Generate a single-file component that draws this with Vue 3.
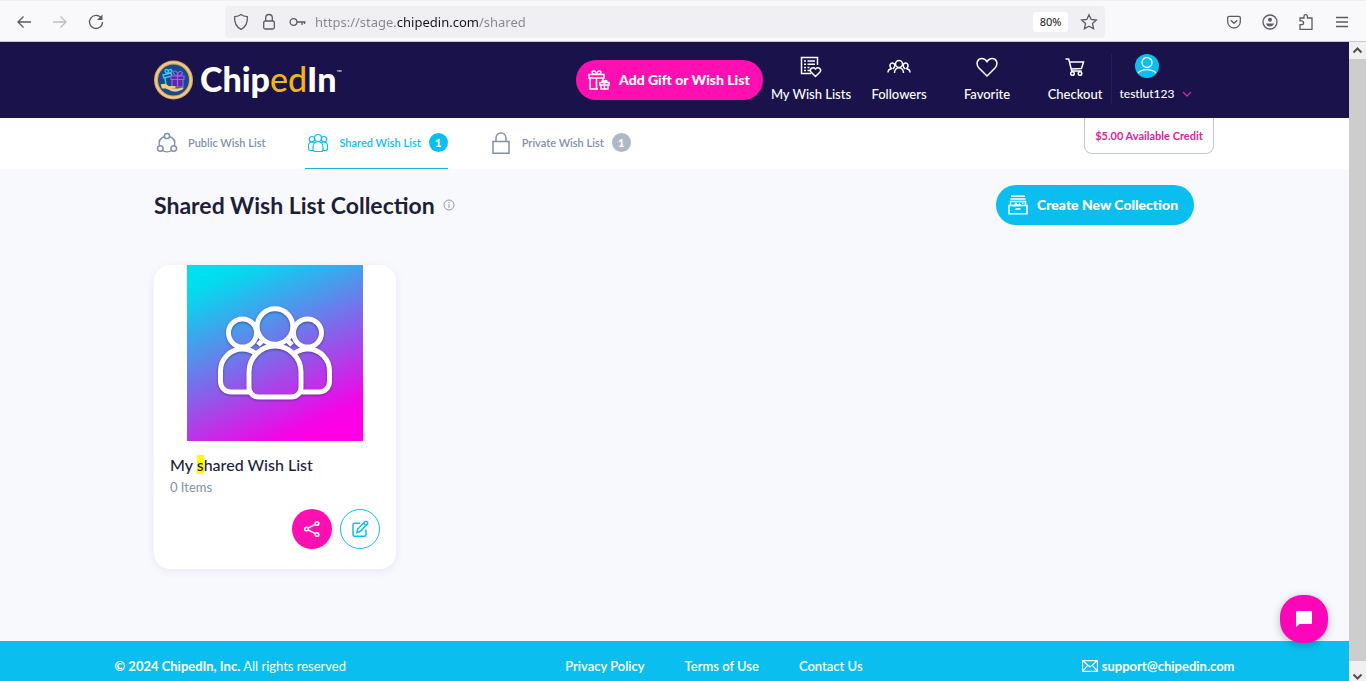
<script setup>
import { ref } from 'vue'

const address = ref('https://stage.chipedin.com/shared')

const tabs = [
  { id: 'public', label: 'Public Wish List', count: null },
  { id: 'shared', label: 'Shared Wish List', count: 1 },
  { id: 'private', label: 'Private Wish List', count: 1 },
]
const activeTab = 'shared'

const footerLinks = ['Privacy Policy', 'Terms of Use', 'Contact Us']
</script>

<template>
  <div class="browser">
    <div class="toolbar">
      <div class="tool-left">
        <button class="tool" aria-label="Back">
          <svg width="18" height="16" viewBox="0 0 18 16"><path d="M16 8H3M8.500 2.500 3 8l5.500 5.500" /></svg>
        </button>
        <button class="tool dim" aria-label="Forward" disabled>
          <svg width="18" height="16" viewBox="0 0 18 16"><path d="M2 8h13M9.500 2.500 15 8l-5.500 5.500" /></svg>
        </button>
        <button class="tool" aria-label="Reload">
          <svg width="18" height="18" viewBox="0 0 18 18"><path d="M14.500 5.500A6.500 6.500 0 1 0 15.500 9" /><path class="solid" d="M15.500 1.500v5.500H10z" /></svg>
        </button>
      </div>
      <div class="urlbar">
        <svg width="16" height="18" viewBox="0 0 16 18"><path d="M8 1.500c2 1.500 4 2 6.300 2.200C14.800 9.500 12.500 14 8 16.300 3.500 14 1.200 9.500 1.700 3.700 4 3.500 6 3 8 1.500z" /></svg>
        <svg width="16" height="18" viewBox="0 0 16 18"><rect x="2.700" y="8" width="10.600" height="8" rx="1.500" /><path d="M4.700 8V4.800a3.300 3.300 0 0 1 6.600 0V8" /></svg>
        <svg width="18" height="12" viewBox="0 0 18 12"><circle cx="4.500" cy="6" r="3.400" /><path d="M8 6h8.500M13 6v3M15.500 6v2" /></svg>
        <input v-model="address" class="address" type="text" aria-label="Address" />
        <button class="zoom-level">80%</button>
        <button class="tool" aria-label="Bookmark this page">
          <svg width="18" height="18" viewBox="0 0 18 18"><path d="m9 1.700 2.200 4.800 5.200.6-3.900 3.500 1.100 5.200L9 13.200l-4.600 2.600 1.100-5.200L1.600 7.100l5.200-.6z" /></svg>
        </button>
      </div>
      <div class="tool-right">
        <button class="tool" aria-label="Save to Pocket">
          <svg width="16" height="16" viewBox="0 0 16 16"><path d="M1.700 3.800a1.500 1.500 0 0 1 1.500-1.500h9.600a1.500 1.500 0 0 1 1.500 1.500v3.900a6.300 6.300 0 0 1-12.600 0zM4.800 6.300 8 9.300l3.200-3" /></svg>
        </button>
        <button class="tool" aria-label="Account">
          <svg width="16" height="16" viewBox="0 0 16 16"><circle cx="8" cy="8" r="7" /><circle class="solid" cx="8" cy="5.800" r="2" /><path class="solid" d="M4 9.500h8a4.200 4.200 0 0 1-8 0z" /></svg>
        </button>
        <button class="tool" aria-label="Extensions">
          <svg width="16" height="18" viewBox="0 0 16 18"><path d="M2 16.300v-4.600h1.700a1.900 1.900 0 0 0 0-3.800H2V5h4V3.400a1.700 1.700 0 0 1 3.400 0V5H14v11.300z" /></svg>
        </button>
        <button class="tool" aria-label="Menu">
          <svg width="16" height="14" viewBox="0 0 16 14"><path d="M2 2.500h12M2 7h12M2 11.500h12" /></svg>
        </button>
      </div>
    </div>

    <div class="viewport">
      <div class="page">
        <header class="header">
          <div class="wrap header-row">
            <a class="logo" href="#" aria-label="ChipedIn home">
              <svg width="40" height="40" viewBox="0 0 40 40">
                <circle cx="19.500" cy="20" r="19.500" fill="#d9a95c" />
                <circle cx="19.500" cy="20" r="17.500" fill="none" stroke="#f0cf90" stroke-width="1.500" />
                <circle cx="19.500" cy="20" r="15.500" fill="#154a8f" />
                <g fill="none" stroke="#45c8ee" stroke-width="1.400">
                  <path d="m9 15 8-2 1 3-8 2zM11 18l1 7M13.500 13.500c-3-1-3-4-1-4s2 2 1.500 4c0-3 2-5 3.500-3.500s-1 3-3.500 3.500" />
                </g>
                <g fill="#5b2aa5" stroke="#a55bea" stroke-width="1.200">
                  <path d="M18 19.500h11V27H18zM17 16h13v3.500H17zM23.500 16v11" />
                  <path fill="none" d="M23.500 16c-5-1-5-5-2.500-5s2.500 3 2.500 5c0-2 1-5 3.500-4.500s2 4-3.500 4.500" />
                </g>
                <path fill="#f0c888" d="M6.500 24.500c4-1.500 6-.5 8 1.500h6c1.500 0 1.500 2 0 2h-4l7 .5 5-1c1.500 0 1 1.500 0 2-3 1.500-6 2.500-9 2-4-.5-6-3-9-3H8z" />
              </svg>
              <span class="wordmark">Chip<i>ed</i>In</span><span class="tm">™</span>
            </a>

            <a class="pill pink" href="#">
              <svg class="line" width="22" height="20" viewBox="0 0 22 20"><path d="M2 8v11h8M1 4.500h15V8H1zM8.500 8V19M15 8v2M8.500 4.500C3 4.500 3.500 1 5.500 1s3 2 3 3.500c0-1.500 1-3.500 3-3.500s2.500 3.500-3 3.500M12 12.500h9V15h-9zM13 15v4h7v-4M16.500 12.500V19M16.500 12.500c-3 0-2.500-2-1.500-2s1.500 1 1.500 2c0-1 .5-2 1.500-2s1.500 2-1.500 2" /></svg>
              Add Gift or Wish List
            </a>

            <nav class="nav" aria-label="Main">
              <a class="nav-item" href="#">
                <svg class="line" width="22" height="22" viewBox="0 0 22 22"><path d="M11 17.500H1.500v-16h16V9M4 5h2M7.500 5H15M4 8.200h2M7.500 8.200H15M4 11.400h2M7.500 11.400h2M4 14.500h2M7.500 14.500H11" /><path d="M15.500 20.500 11 16c-2-2.500 1.500-6 4.500-3 3-3 6.500.5 4.500 3z" /></svg>
                <span>My Wish Lists</span>
              </a>
              <a class="nav-item" href="#">
                <svg class="line" width="24" height="22" viewBox="0 0 24 22"><circle cx="12" cy="8" r="3.500" /><path d="M7.500 17c0-7 9-7 9 0M4.800 13c-4-4-.5-6 .5-6s2.500 1 2.500 2.500-.8 2.500-2 3.500M1 16.500c0-2 1.500-3.500 3.500-3.500M19.200 13c4-4 .5-6-.5-6s-2.500 1-2.500 2.500.8 2.500 2 3.500M23 16.500c0-2-1.500-3.500-3.500-3.500" /></svg>
                <span>Followers</span>
              </a>
              <a class="nav-item" href="#">
                <svg class="line" width="22" height="22" viewBox="0 0 22 22"><path d="M11 20 3 12C-1 7 2 2.500 6 2.500c2.500 0 4 1.500 5 3.200 1-1.700 2.500-3.200 5-3.200 4 0 7 4.500 3 9.500z" /></svg>
                <span>Favorite</span>
              </a>
              <a class="nav-item" href="#">
                <svg class="line" width="22" height="22" viewBox="0 0 22 22"><path d="M1.500 3h3.200l3 12h10M6 6h13.500l-2 6.500-10.500.5" /><circle cx="8.500" cy="17.500" r="1.800" /><circle cx="16" cy="17.500" r="1.800" /></svg>
                <span>Checkout</span>
              </a>
              <button class="account">
                <svg class="avatar" width="24" height="24" viewBox="0 0 24 24"><circle cx="12" cy="12" r="12" fill="#0abff0" /><g fill="none" stroke="#fff" stroke-width="1.300"><circle cx="12" cy="8.500" r="5" /><path d="M3 19c4-4.500 14-4.500 18 0" /></g></svg>
                <span>testlut123</span>
                <svg class="chevron" width="10" height="6" viewBox="0 0 10 6"><path d="m1 1 4 4 4-4" fill="none" stroke="#d91fae" stroke-width="1.300" /></svg>
              </button>
            </nav>
          </div>
        </header>

        <div class="tabbar">
          <div class="wrap tab-row">
            <nav class="tabs" aria-label="Wish lists">
              <a v-for="tab in tabs" :key="tab.id" href="#" class="tab" :class="{ active: tab.id === activeTab }">
                <svg v-if="tab.id === 'public'" class="line" width="26" height="22" viewBox="0 0 26 22"><circle cx="13" cy="4" r="2.600" /><circle cx="6.300" cy="16.500" r="2.800" /><circle cx="19.700" cy="16.500" r="2.800" /><path d="M10.500 4.500C6.500 6 4.500 9.500 5.500 13.500M15.500 4.500c4 1.500 6 5 5 9M8.500 18.500c2.500 1.700 6.500 1.700 9 0" /></svg>
                <svg v-else-if="tab.id === 'shared'" class="line thin" width="26" height="22" viewBox="0 0 26 22"><circle cx="13" cy="6" r="3.500" /><circle cx="7" cy="7.200" r="2.700" /><circle cx="19" cy="7.200" r="2.700" /><path d="M8 15c0-7 10-7 10 0v2.500a2 2 0 0 1-2 2h-6a2 2 0 0 1-2-2zM8 18.500H5.500a2 2 0 0 1-2-2V14c0-2.500 1.500-4 3.500-4 1 0 2 .3 2.500 1M18 18.500h2.500a2 2 0 0 0 2-2V14c0-2.500-1.500-4-3.500-4-1 0-2 .3-2.500 1" /></svg>
                <svg v-else class="line" width="26" height="22" viewBox="0 0 26 22"><path d="M5 9.500h16v11.800H5zM8 9.500V6.200c0-7 10-7 10 0v3.300" /></svg>
                <span>{{ tab.label }}</span>
                <b v-if="tab.count" class="badge">{{ tab.count }}</b>
              </a>
            </nav>
            <a class="credit" href="#">$5.00 Available Credit</a>
          </div>
        </div>

        <main class="main">
          <div class="wrap heading">
            <h1>Shared Wish List Collection</h1>
            <button class="info" aria-label="About shared wish lists">
              <svg width="12" height="12" viewBox="0 0 12 12"><circle cx="6" cy="6" r="5" /><path d="M6 5.200V9M6 3v1" /></svg>
            </button>
            <a class="pill blue" href="#">
              <svg class="line" width="20" height="20" viewBox="0 0 20 20"><path d="M3 1.200h14M2.500 4h15M2.500 10.500V6.500h15v4M1 10.500h18v8.300H1zM7.500 14h5" /><path class="fill" d="m4.500 11.500 3.500-4 2 2 2-1.500 1 3zM14 7.500h1.500V9H14z" /></svg>
              Create New Collection
            </a>
          </div>

          <ul class="wrap cards">
            <li class="card">
              <svg class="cover" viewBox="0 0 176 176" role="img" aria-label="Group">
                <defs>
                  <linearGradient id="cover-fill" x1=".24" y1="0" x2=".7" y2="1">
                    <stop offset="0" stop-color="#00dfee" />
                    <stop offset=".06" stop-color="#05d9ee" />
                    <stop offset=".54" stop-color="#8563ea" />
                    <stop offset=".92" stop-color="#f404e6" />
                    <stop offset="1" stop-color="#ff00e6" />
                  </linearGradient>
                </defs>
                <rect width="176" height="176" fill="url(#cover-fill)" />
                <g class="people">
                  <circle cx="55.500" cy="68" r="14" />
                  <circle cx="120.500" cy="68" r="14" />
                  <circle cx="88" cy="61.500" r="17.800" />
                  <path d="M62 127H44a10.500 10.500 0 0 1-10.500-10.500V106a22 22 0 0 1 22-22c5 0 9 1.500 12.500 4M114 127h18a10.500 10.500 0 0 0 10.500-10.500V106a22 22 0 0 0-22-22c-5 0-9 1.500-12.500 4" />
                  <path d="M62 107a26 26 0 0 1 52 0v15.500a9.500 9.500 0 0 1-9.500 9.500h-33a9.500 9.500 0 0 1-9.500-9.500zM71 80l4-4M105 80l-4-4" />
                </g>
              </svg>
              <div class="card-body">
                <h2>My <mark>s</mark>hared Wish List</h2>
                <p>0 Items</p>
                <div class="actions">
                  <button class="round share" aria-label="Share">
                    <svg class="line" width="18" height="18" viewBox="0 0 18 18"><circle cx="3.500" cy="9" r="1.800" /><circle cx="14" cy="3.500" r="1.800" /><circle cx="14" cy="14.500" r="1.800" /><path d="m5.200 8.200 7-3.800M5.200 9.800l7 3.800" /></svg>
                  </button>
                  <button class="round edit" aria-label="Edit">
                    <svg class="line" width="18" height="18" viewBox="0 0 18 18"><path d="M9 3.200H3.500A1.500 1.500 0 0 0 2 4.700v10A1.500 1.500 0 0 0 3.500 16.200h10a1.500 1.500 0 0 0 1.500-1.500V9.500M6 12.500l.7-3.500L14 1.500c1.500-1 3.300.7 2.500 2.300L9.300 11.300zM12.500 3.200l2.300 2.300" /></svg>
                  </button>
                </div>
              </div>
            </li>
          </ul>
        </main>

        <footer class="footer">
          <div class="footer-row">
            <p><strong>© 2024 ChipedIn, Inc.</strong> All rights reserved</p>
            <nav class="footer-links" aria-label="Legal">
              <a v-for="link in footerLinks" :key="link" href="#">{{ link }}</a>
            </nav>
            <a class="mail" href="mailto:support@chipedin.com">
              <svg width="16" height="12" viewBox="0 0 16 12"><path d="M.6.600h14.800v10.800H.6zM.6.600 8 7 15.400.600M.6 11.400l5-6M15.400 11.400l-5-6" /></svg>
              support@chipedin.com
            </a>
          </div>
        </footer>

        <button class="chat" aria-label="Open chat">
          <svg width="18" height="18" viewBox="0 0 18 18"><path fill="#fff" d="M2 1h14a1 1 0 0 1 1 1v11a1 1 0 0 1-1 1H4.500L1 17V2a1 1 0 0 1 1-1z" /></svg>
        </button>
      </div>

      <div class="scrollbar" aria-hidden="true">
        <svg width="17" height="17" viewBox="0 0 17 17"><path d="m4.500 10.500 4-4 4 4" /></svg>
        <div class="thumb"></div>
        <svg width="17" height="20" viewBox="0 0 17 20"><path d="m4.500 13.500 4 4 4-4" /></svg>
      </div>
    </div>
  </div>
</template>

<style>
body {
  margin: 0;
}
</style>

<style scoped>
* {
  box-sizing: border-box;
}
.browser {
  display: flex;
  flex-direction: column;
  min-height: 100vh;
  font-family: Lato, "Liberation Sans", sans-serif;
  color: #1f1d3a;
}
a {
  color: inherit;
  text-decoration: none;
}
button {
  padding: 0;
  border: 0;
  background: none;
  color: inherit;
  font: inherit;
  cursor: pointer;
}
h1,
h2,
p,
ul {
  margin: 0;
  padding: 0;
}
svg {
  display: block;
  flex: none;
}
.line {
  fill: none;
  stroke: currentColor;
  stroke-width: 1.5;
}
.line.thin {
  stroke-width: 1.2;
}
.line .fill {
  fill: currentColor;
  stroke: none;
}

/* Browser toolbar */
.toolbar {
  display: flex;
  align-items: center;
  height: 42px;
  padding-top: 1px;
  background: #f9f9fb;
  border-top: 1px solid #f0f0f4;
  border-bottom: 1px solid #c8c6d6;
}
.toolbar svg {
  fill: none;
  stroke: #5b5b66;
  stroke-width: 1.3;
}
.toolbar .solid {
  fill: #5b5b66;
  stroke: none;
}
.toolbar .dim svg {
  stroke: #bdbdc3;
}
.tool-left {
  display: flex;
  align-items: center;
  gap: 18px;
  width: 225px;
  padding-left: 15px;
}
.tool-right {
  display: flex;
  align-items: center;
  justify-content: flex-end;
  gap: 20px;
  width: 261px;
  padding-right: 16px;
}
.urlbar {
  display: flex;
  flex: 1;
  align-items: center;
  gap: 12px;
  height: 32px;
  padding: 0 7px 0 8px;
  border-radius: 4px;
  background: #f0f0f4;
}
.address {
  flex: 1;
  min-width: 0;
  height: 24px;
  margin-left: -4px;
  padding: 0;
  border: 0;
  outline: 0;
  background: linear-gradient(90deg, #85858d 81px, #15141a 81px, #15141a 163px, #85858d 163px);
  background-clip: text;
  -webkit-background-clip: text;
  color: transparent;
  font: 13px "Noto Sans", sans-serif;
}
.zoom-level {
  width: 35px;
  height: 20px;
  border-radius: 3px;
  background: #fff;
  color: #15141a;
  font: 11px "Noto Sans", sans-serif;
}

/* Page frame */
.viewport {
  display: flex;
  flex: 1;
}
.page {
  position: relative;
  display: flex;
  flex: 1;
  flex-direction: column;
  min-width: 0;
  background: #f8f9fd;
}
.wrap {
  width: 100%;
  max-width: 1041px;
  margin: 0 auto;
  padding-right: 1px;
}
.scrollbar {
  display: flex;
  flex-direction: column;
  width: 17px;
  background: #f0f0f0;
}
.scrollbar svg {
  fill: none;
  stroke: #505050;
  stroke-width: 2;
}
.thumb {
  flex: 1;
  background: #cdcdcd;
}

/* Header */
.header {
  background: #19124b;
  color: #fff;
}
.header-row {
  display: flex;
  align-items: center;
  gap: 12px;
  height: 76px;
}
.logo {
  display: flex;
  align-items: center;
  margin-right: auto;
}
.wordmark {
  margin-left: 6px;
  padding-bottom: 2px;
  font-size: 34px;
  font-weight: 900;
  line-height: 38px;
}
.wordmark i {
  color: #f5b50f;
  font-style: normal;
  font-weight: 500;
}
.tm {
  align-self: flex-start;
  font-size: 7px;
  line-height: 24px;
}
.pill {
  display: flex;
  align-items: center;
  gap: 9px;
  height: 40px;
  padding: 0 0 1px 12px;
  border-radius: 20px;
  color: #fff;
  font-size: 14px;
  font-weight: 900;
  white-space: nowrap;
}
.pink {
  width: 187px;
  background: #fd0fb2;
}
.blue {
  width: 198px;
  margin-left: auto;
  background: #0abff0;
}
.nav {
  display: flex;
  gap: 16px;
  padding-bottom: 4px;
  font-size: 13px;
  font-weight: 500;
  line-height: 18px;
  white-space: nowrap;
}
.nav-item {
  display: flex;
  flex-direction: column;
  align-items: center;
  gap: 7px;
  width: 72px;
  padding-top: 2px;
}
.account {
  display: grid;
  grid-template-columns: 54px 10px;
  justify-items: center;
  align-items: center;
  column-gap: 8px;
  row-gap: 7px;
  width: 83px;
  margin-left: -16px;
  padding-left: 8px;
  border-left: 1px solid #251c63;
  font-size: 12px;
}
.avatar {
  grid-area: 1 / 1;
}
.account span {
  grid-area: 2 / 1;
}
.chevron {
  grid-area: 2 / 2;
}

/* Tabs */
.tabbar {
  background: #fff;
}
.tab-row {
  display: flex;
  align-items: flex-start;
  justify-content: space-between;
  height: 51px;
}
.tabs {
  display: flex;
  gap: 40px;
  height: 100%;
}
.tab {
  display: flex;
  align-items: center;
  gap: 8px;
  padding-bottom: 1px;
  border-bottom: 1px solid transparent;
  color: #8391a6;
  font-size: 11px;
  font-weight: 600;
  white-space: nowrap;
}
.tab.active {
  border-color: #1cb5dd;
  color: #0abff0;
}
.badge {
  width: 19px;
  border-radius: 10px;
  background: #b0b8c6;
  color: #fff;
  font-size: 11px;
  line-height: 19px;
  text-align: center;
}
.active .badge {
  background: #0abff0;
}
.credit {
  width: 130px;
  margin-right: -20px;
  border: 1px solid #c3cad4;
  border-top: 0;
  border-radius: 0 0 8px 8px;
  color: #e0219e;
  font-size: 11px;
  font-weight: 700;
  line-height: 35px;
  text-align: center;
  white-space: nowrap;
}

/* Collection */
.main {
  flex: 1;
  padding: 16px 0 72px;
}
.heading {
  display: flex;
  align-items: center;
  gap: 8px;
}
h1 {
  font-size: 23px;
  font-weight: 700;
  line-height: 40px;
  white-space: nowrap;
}
.info svg {
  fill: none;
  stroke: #8f9aad;
  stroke-width: 1;
}
.cards {
  display: grid;
  grid-template-columns: repeat(auto-fill, 242px);
  gap: 24px;
  margin-top: 40px;
  list-style: none;
}
.card {
  overflow: hidden;
  border-radius: 16px;
  background: #fff;
  box-shadow: 0 2px 8px #e6e8f6;
}
.cover {
  width: 176px;
  height: 176px;
  margin: 0 auto;
}
.people {
  fill: none;
  stroke: #fff;
  stroke-width: 5;
  filter: drop-shadow(0 1px 1px #30206090);
}
.card-body {
  padding: 13px 16px 20px;
}
h2 {
  font-size: 16px;
  font-weight: 500;
  line-height: 22px;
}
mark {
  background: #ff0;
  color: inherit;
}
.card p {
  color: #8391a6;
  font-size: 13px;
  line-height: 22px;
}
.actions {
  display: flex;
  justify-content: flex-end;
  gap: 8px;
  margin-top: 11px;
}
.round {
  display: grid;
  place-items: center;
  width: 40px;
  height: 40px;
  border-radius: 50%;
}
.share {
  background: #fd0fb2;
  color: #fff;
}
.edit {
  border: 1px solid #1cbbe2;
  color: #0abff0;
}

/* Footer */
.footer {
  padding: 15px 0 5px;
  background: #0abff0;
  color: #fff;
}
.footer-row {
  display: flex;
  justify-content: space-between;
  width: 100%;
  max-width: 1120px;
  margin: 0 auto;
  font-size: 13px;
  line-height: 20px;
  white-space: nowrap;
}
.footer-links {
  display: flex;
  gap: 40px;
  font-weight: 600;
}
.mail {
  display: flex;
  align-items: center;
  gap: 4px;
  font-weight: 700;
}
.mail svg {
  fill: none;
  stroke: #fff;
  stroke-width: 1.1;
}
.chat {
  position: absolute;
  right: 21px;
  bottom: 38px;
  display: grid;
  place-items: center;
  width: 48px;
  height: 48px;
  border-radius: 22px;
  background: #fb06b8;
  box-shadow: 0 2px 8px #00000040;
}
</style>
